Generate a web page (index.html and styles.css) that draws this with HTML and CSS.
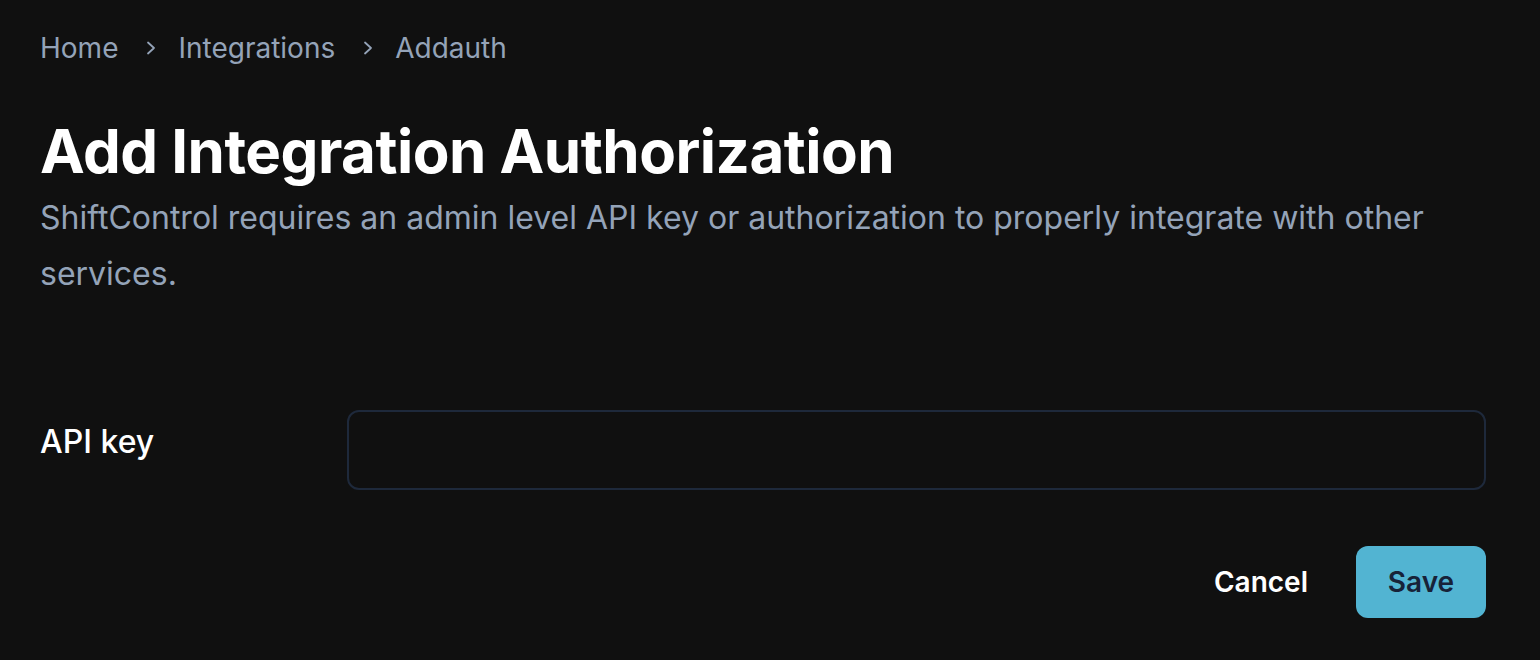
FILE: index.html
```html
<!DOCTYPE html>
<html lang="en">
<head>
<meta charset="utf-8">
<title>Add Integration Authorization</title>
<link rel="stylesheet" href="styles.css">
</head>
<body>
<main class="page">
  <nav class="crumbs">
    <a class="crumb" href="#">Home</a>
    <svg class="sep" viewBox="0 0 12 14" width="12" height="14"><path d="M3 1.5l6 5.5-6 5.5" fill="none" stroke="currentColor" stroke-width="1.8" stroke-linecap="round" stroke-linejoin="round"/></svg>
    <a class="crumb" href="#">Integrations</a>
    <svg class="sep" viewBox="0 0 12 14" width="12" height="14"><path d="M3 1.5l6 5.5-6 5.5" fill="none" stroke="currentColor" stroke-width="1.8" stroke-linecap="round" stroke-linejoin="round"/></svg>
    <span class="crumb">Addauth</span>
  </nav>
  <h1 class="title">Add Integration Authorization</h1>
  <p class="desc">ShiftControl requires an admin level API key or authorization to properly integrate with other services.</p>
  <form class="form">
    <div class="row">
      <label class="label" for="key">API key</label>
      <input class="input" id="key" type="text">
    </div>
    <div class="actions">
      <button type="button" class="btn-cancel">Cancel</button>
      <button type="button" class="btn-save">Save</button>
    </div>
  </form>
</main>
</body>
</html>
```
FILE: styles.css
```css
* { box-sizing: border-box; }
html, body { margin: 0; background: #101010; }
body { font-family: Inter, "Noto Sans", sans-serif; }
.page { padding: 28px 54px 0 40px; }
.crumbs { display: flex; align-items: center; height: 40px; font-size: 28px; color: #94a3b8; }
.crumb { color: #94a3b8; text-decoration: none; }
.sep { color: #94a3b8; margin: 0 21px 0 27px; }
.title { margin: 47px 0 0; font-size: 60px; font-weight: 700; line-height: 72px; color: #fff; letter-spacing: -0.5px; }
.desc { margin: 3px 0 0; font-size: 32px; line-height: 56px; color: #94a3b8; max-width: 1440px; }
.form { margin-top: 108px; }
.row { display: flex; align-items: center; }
.label { width: 307px; flex: none; font-size: 32px; font-weight: 500; color: #fff; margin-bottom: 18px; }
.input { flex: 1; height: 80px; background: #101010; border: 2px solid #1e293b; border-radius: 12px; color: #fff; font: inherit; font-size: 28px; padding: 0 24px; }
.actions { display: flex; justify-content: flex-end; align-items: center; gap: 48px; margin-top: 56px; }
.btn-cancel { background: none; border: none; color: #fff; font: inherit; font-size: 28px; font-weight: 600; padding: 0; }
.btn-save { width: 130px; height: 72px; background: #52b4d2; border: none; border-radius: 12px; color: #172238; font: inherit; font-size: 28px; font-weight: 600; }
```
